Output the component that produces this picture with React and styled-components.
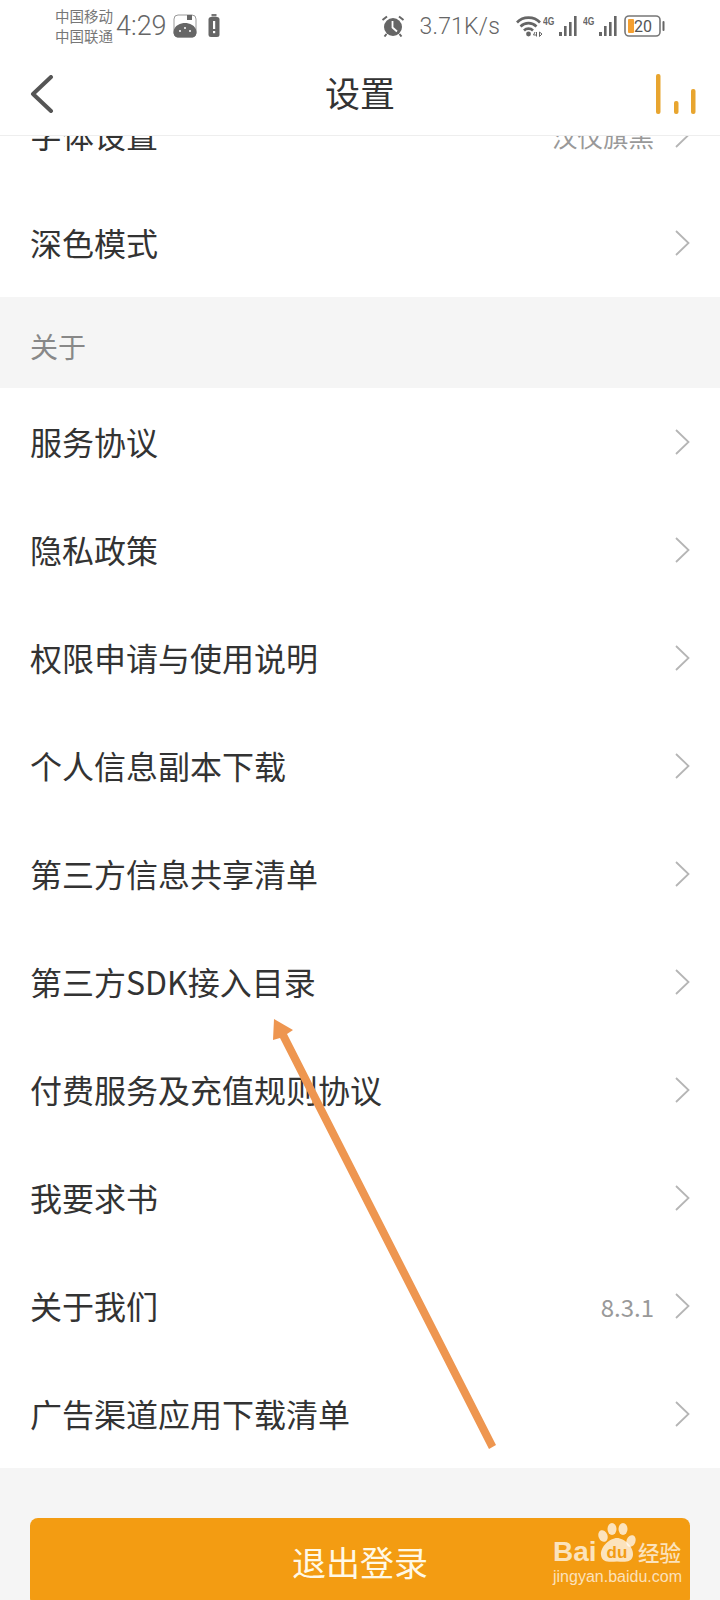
import React from 'react';
import styled, { createGlobalStyle } from 'styled-components';

const GlobalStyle = createGlobalStyle`
  html, body {
    margin: 0;
    padding: 0;
    background: #f5f5f5;
  }
  * { box-sizing: border-box; }
`;

const Page = styled.div`
  position: relative;
  width: 720px;
  height: 1600px;
  overflow: hidden;
  background: #f5f5f5;
  font-family: "Noto Sans CJK SC", "Noto Sans", sans-serif;
  color: #333;
`;

const Header = styled.header`
  position: relative;
  z-index: 2;
  height: 136px;
  background: #fff;
  border-bottom: 1px solid #eee;
`;

const StatusBar = styled.div`
  display: flex;
  align-items: center;
  height: 52px;
  padding: 0 54px 0 55px;
  color: #666;
`;

const Carrier = styled.div`
  width: 61px;
  font-size: 14.5px;
  line-height: 20px;
  color: #777;
`;

const Clock = styled.span`
  font-family: "Roboto", sans-serif;
  font-weight: 300;
  font-size: 27px;
  margin-right: 6px;
`;

const Speed = styled.span`
  font-family: "Roboto", sans-serif;
  font-weight: 300;
  font-size: 23px;
  letter-spacing: 0.2px;
  margin: 0 16px 0 15px;
  color: #666;
`;

const Spacer = styled.div`
  flex: 1;
`;

const Nav = styled.div`
  position: relative;
  display: flex;
  align-items: center;
  justify-content: space-between;
  height: 84px;
  padding: 0 23px 0 30px;
`;

const Title = styled.h1`
  position: absolute;
  left: 0;
  right: 0;
  margin: 0;
  padding-bottom: 5px;
  text-align: center;
  font-size: 35px;
  font-weight: 400;
  color: #333;
`;

const List = styled.div`
  margin-top: -55px;
  background: #fff;
`;

const Row = styled.div`
  display: flex;
  align-items: center;
  height: 108px;
  padding: 0 30px;
  background: #fff;
`;

const RowLabel = styled.span`
  flex: 1;
  margin-bottom: 2px;
  font-size: 32px;
  line-height: 1;
  color: #333;
`;

const RowValue = styled.span`
  font-size: ${(p) => p.$size || 25.5}px;
  color: #999;
  margin-right: 21px;
`;

const Section = styled.div`
  display: flex;
  align-items: center;
  height: 91px;
  padding: 6px 30px 0;
  background: #f5f5f5;
  font-size: 28px;
  color: #888;
`;

const Footer = styled.div`
  padding: 50px 30px 0;
`;

const LogoutButton = styled.button`
  display: block;
  width: 100%;
  height: 88px;
  padding: 0 0 2px;
  border: 0;
  border-radius: 8px;
  background: #f39c12;
  color: #fff9e6;
  font-family: inherit;
  font-size: 34px;
`;

const Arrow = styled.svg`
  position: absolute;
  left: 0;
  top: 0;
  z-index: 3;
  pointer-events: none;
`;

const Watermark = styled.div`
  position: absolute;
  left: 553px;
  top: 1523px;
  z-index: 3;
  width: 130px;
  color: rgba(255, 255, 255, 0.72);
`;

const MarkTop = styled.div`
  display: flex;
  align-items: flex-end;
  height: 45px;
  font-family: "Liberation Sans", sans-serif;
  font-weight: 700;
`;

const MarkBai = styled.span`
  font-size: 28px;
  line-height: 32px;
  width: 44px;
`;

const MarkCn = styled.span`
  font-family: "Noto Sans CJK SC", sans-serif;
  font-size: 21.5px;
  line-height: 32px;
  font-weight: 500;
`;

const MarkUrl = styled.div`
  font-family: "Liberation Sans", sans-serif;
  font-size: 16px;
  line-height: 18px;
  white-space: nowrap;
`;

const Chevron = () => (
  <svg width="15" height="26" viewBox="0 0 15 26" fill="none">
    <path d="M1 1 L13.5 13 L1 25" stroke="#b5b5b5" strokeWidth="1.8" />
  </svg>
);

const BackIcon = () => (
  <svg width="24" height="38" viewBox="0 0 24 38" fill="none">
    <path d="M21 2 L3 19 L21 36" stroke="#555" strokeWidth="4" strokeLinecap="round" strokeLinejoin="round" />
  </svg>
);

const BarsIcon = () => (
  <svg width="42" height="40" viewBox="0 0 42 40" fill="#e8a52f">
    <rect x="1" y="0" width="4.5" height="40" rx="2" />
    <rect x="19" y="27" width="4.5" height="13" rx="2" />
    <rect x="36" y="15" width="4.5" height="25" rx="2" />
  </svg>
);

const AppBadge = () => (
  <svg width="24" height="24" viewBox="0 0 24 24" style={{ marginRight: 10 }}>
    <rect x="1" y="1" width="22" height="22" rx="4" fill="none" stroke="#999" strokeWidth="1" />
    <rect x="14" y="1" width="5" height="5" fill="#666" />
    <path d="M0.5 18 C1 11 8 9 12 9 C16 9 23 11 23.5 18 C23.5 22 21 23.5 19 23.5 H5 C3 23.5 0.5 22 0.5 18 Z" fill="#666" />
    <circle cx="7" cy="17" r="1" fill="#fff" />
    <circle cx="12" cy="14" r="1" fill="#fff" />
    <circle cx="17" cy="17" r="1" fill="#fff" />
  </svg>
);

const BatteryAlert = () => (
  <svg width="14" height="24" viewBox="0 0 14 24">
    <rect x="4.5" y="0" width="5" height="2.5" fill="#777" />
    <rect x="1.5" y="3" width="11" height="20" rx="2.5" fill="#666" />
    <rect x="6" y="7" width="2.2" height="8" fill="#fff" />
    <rect x="6" y="17" width="2.2" height="2.2" fill="#fff" />
  </svg>
);

const AlarmIcon = () => (
  <svg width="24" height="22" viewBox="0 0 24 22">
    <circle cx="12" cy="12" r="9" fill="#666" />
    <path d="M11.5 6 V12.5 L16 16.5" stroke="#fff" strokeWidth="1.8" fill="none" />
    <path d="M1.5 5 L6 1.5 M22.5 5 L18 1.5 M5.5 19 L3.5 21.5 M18.5 19 L20.5 21.5" stroke="#666" strokeWidth="2" />
  </svg>
);

const WifiIcon = () => (
  <svg width="27" height="22" viewBox="0 0 27 22" fill="none" stroke="#666" strokeWidth="2.6">
    <path d="M1 7.5 C7 1 18 1 24 7.5" />
    <path d="M4.5 11.5 C9 7 16 7 20.5 11.5" />
    <path d="M8 15.5 C10.5 13 14.5 13 17 15.5" />
    <circle cx="12.5" cy="19" r="2.4" fill="#666" stroke="none" />
    <path d="M19 17 L17.5 20 H21 M20.5 17 V21.5 M23.5 17 V21.5 L26 19 Z" strokeWidth="1" />
  </svg>
);

const SignalTag = styled.text`
  font-family: "Liberation Sans", sans-serif;
  font-size: 10px;
  font-weight: 700;
`;

const SignalIcon = () => (
  <svg width="34" height="22" viewBox="0 0 34 22" fill="#666" style={{ marginRight: 6 }}>
    <SignalTag x="0" y="10" transform="scale(0.85 1)">4G</SignalTag>
    <rect x="16" y="17" width="3" height="4" />
    <rect x="21" y="11" width="2.6" height="10" />
    <rect x="26" y="7" width="2.6" height="14" />
    <rect x="31" y="1" width="2.6" height="20" />
  </svg>
);

const BatteryIcon = () => (
  <svg width="42" height="22" viewBox="0 0 42 22" style={{ marginLeft: 1 }}>
    <rect x="1" y="1" width="35" height="20" rx="4" fill="none" stroke="#777" strokeWidth="1.6" />
    <rect x="4" y="4" width="6" height="14" rx="1" fill="#f5a030" />
    <text x="10" y="17" fontSize="16" fill="#555" fontFamily="Roboto, sans-serif">20</text>
    <rect x="38.5" y="6" width="2" height="10" rx="1" fill="#666" />
  </svg>
);

const PawIcon = () => (
  <svg width="41" height="40" viewBox="0 0 41 40" fill="currentColor" style={{ alignSelf: 'flex-start' }}>
    <ellipse cx="6" cy="13" rx="4.5" ry="6" transform="rotate(-20 6 13)" />
    <ellipse cx="15" cy="6" rx="4.5" ry="6" />
    <ellipse cx="26" cy="6" rx="4.5" ry="6" />
    <ellipse cx="34" cy="18" rx="4.5" ry="6" transform="rotate(20 34 18)" />
    <path d="M20 15 C27 15 37 24 36 32 C35 40 27 39 20 38.5 C13 39 5 40 4 32 C3 24 13 15 20 15 Z" />
    <text x="20" y="35" textAnchor="middle" fontSize="17" fontWeight="700" fontFamily="Liberation Sans, sans-serif" fill="#f39c12">du</text>
  </svg>
);

const topRows = [
  { label: '字体设置', value: '汉仪旗黑' },
  { label: '深色模式' }
];

const aboutRows = [
  { label: '服务协议' },
  { label: '隐私政策' },
  { label: '权限申请与使用说明' },
  { label: '个人信息副本下载' },
  { label: '第三方信息共享清单' },
  { label: '第三方SDK接入目录' },
  { label: '付费服务及充值规则协议' },
  { label: '我要求书' },
  { label: '关于我们', value: '8.3.1', size: 24 },
  { label: '广告渠道应用下载清单' }
];

const SettingRow = ({ label, value, size }) => (
  <Row>
    <RowLabel>{label}</RowLabel>
    {value && <RowValue $size={size}>{value}</RowValue>}
    <Chevron />
  </Row>
);

export default function App() {
  return (
    <Page>
      <GlobalStyle />
      <Header>
        <StatusBar>
          <Carrier>
            <div>中国移动</div>
            <div>中国联通</div>
          </Carrier>
          <Clock>4:29</Clock>
          <AppBadge />
          <BatteryAlert />
          <Spacer />
          <AlarmIcon />
          <Speed>3.71K/s</Speed>
          <WifiIcon />
          <SignalIcon />
          <SignalIcon />
          <BatteryIcon />
        </StatusBar>
        <Nav>
          <BackIcon />
          <Title>设置</Title>
          <BarsIcon />
        </Nav>
      </Header>
      <List>
        {topRows.map((r) => <SettingRow key={r.label} {...r} />)}
        <Section>关于</Section>
        {aboutRows.map((r) => <SettingRow key={r.label} {...r} />)}
      </List>
      <Footer>
        <LogoutButton>退出登录</LogoutButton>
      </Footer>
      <Arrow width="720" height="1600" viewBox="0 0 720 1600">
        <path d="M274 1019 L293 1030 L287 1034 L496 1445 L489 1449 L280 1038 L273 1040 Z" fill="#ee9650" />
      </Arrow>
      <Watermark>
        <MarkTop>
          <MarkBai>Bai</MarkBai>
          <PawIcon />
          <MarkCn>经验</MarkCn>
        </MarkTop>
        <MarkUrl>jingyan.baidu.com</MarkUrl>
      </Watermark>
    </Page>
  );
}
